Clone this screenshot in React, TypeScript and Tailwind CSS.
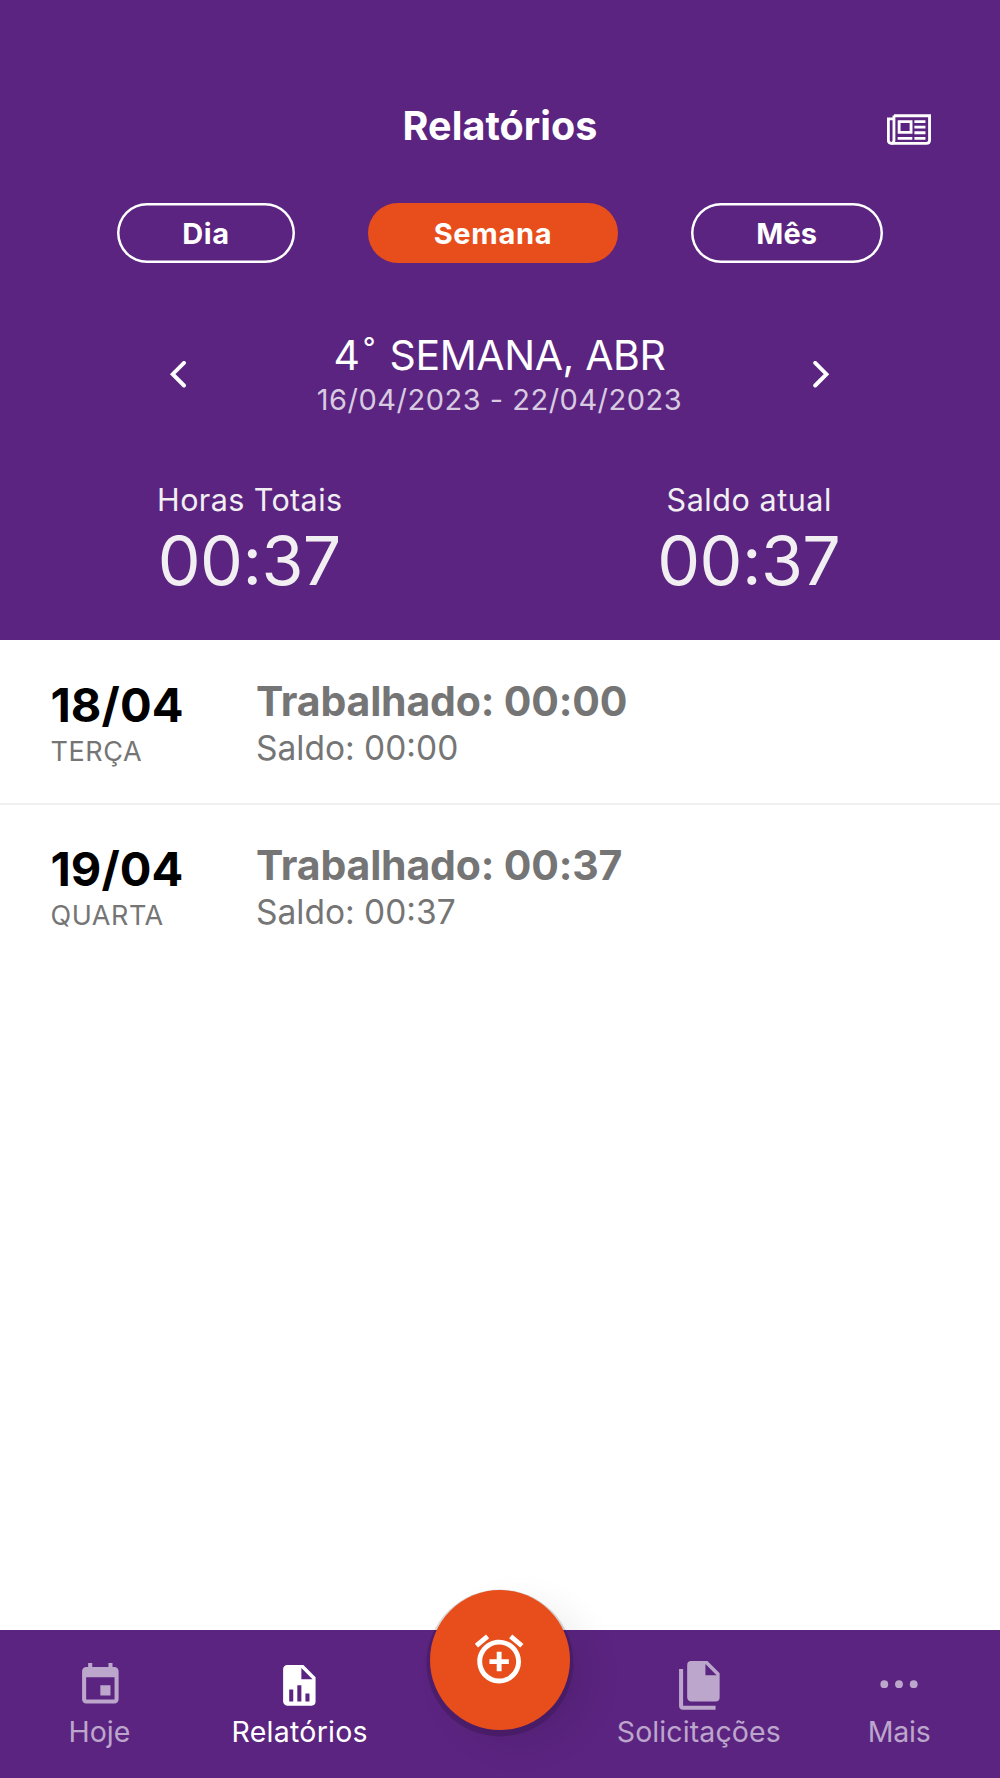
import type { ReactNode } from "react";
import { MdAlarmAdd } from "react-icons/md";

function NewspaperIcon() {
  return (
    <svg width="45" height="32" viewBox="0 0 46 32" fill="none" stroke="currentColor" strokeWidth="2.9">
      <path d="M7.1 1.4H43.5V26.4Q43.5 29.7 40.2 29.7H4.6Q1.4 29.7 1.4 26.4V4.7H7.1" />
      <path d="M7.1 1.3V26.4Q7.1 29.7 4.3 29.7" />
      <path d="M12.4 7.5H24.6V18.5H12.4Z" />
      <path d="M10.9 24.5H25.9M28 7.4H39.3M28 13.1H39.3M28 18.8H39.3M28 24.5H39.3" />
    </svg>
  );
}

function Chevron({ direction }: { direction: "left" | "right" }) {
  return (
    <svg width="18" height="28" viewBox="0 0 18 28" fill="none" stroke="currentColor" strokeWidth="3.9" strokeLinecap="round">
      <path d={direction === "left" ? "M15 1.8L3.7 13.2L15 24.5" : "M3.2 1.8L14.5 13.2L3.2 24.5"} />
    </svg>
  );
}

const CALENDAR =
  "M17 12h-5v5h5v-5zM16 1v2H8V1H6v2H5c-1.1 0-2 .9-2 2v14c0 1.1.9 2 2 2h14c1.1 0 2-.9 2-2V5c0-1.1-.9-2-2-2h-1V1h-2zm3 18H5V8h14v11z";
const FILE_CHART =
  "M13,9H18.5L13,3.5V9M6,2H14L20,8V20A2,2 0 0,1 18,22H6C4.89,22 4,21.1 4,20V4C4,2.89 4.89,2 6,2M7,20H9V14H7V20M11,20H13V12H11V20M15,20H17V16H15V20Z";
const FILES =
  "M15,7H20.5L15,1.5V7M8,0H16L22,6V18A2,2 0 0,1 20,20H8C6.89,20 6,19.1 6,18V2A2,2 0 0,1 8,0M4,4V22H20V24H4A2,2 0 0,1 2,22V4H4Z";

function Glyph({ d }: { d: string }) {
  return (
    <svg width="48.7" height="48.7" viewBox="0 0 24 24" fill="currentColor">
      <path d={d} />
    </svg>
  );
}

function Dots() {
  return (
    <svg width="48" height="48" viewBox="0 0 48 48" fill="currentColor">
      <circle cx="9.3" cy="23.2" r="3.9" />
      <circle cx="24" cy="23.2" r="3.9" />
      <circle cx="38.7" cy="23.2" r="3.9" />
    </svg>
  );
}

function Tab({ icon, label, active = false, className }: { icon: ReactNode; label: string; active?: boolean; className: string }) {
  return (
    <button className={`flex flex-col items-center pt-[30.6px] ${active ? "text-white" : "text-[#bda6cc]"}`}>
      <span className="flex h-[53.4px] items-start">{icon}</span>
      <span className={`text-[28.5px] leading-9 whitespace-nowrap ${className}`}>{label}</span>
    </button>
  );
}

function Total({ label, value, className }: { label: string; value: string; className: string }) {
  return (
    <div className="flex flex-col items-center text-[#f1eff2]">
      <span className={`text-[30.5px] leading-9 ${className}`}>{label}</span>
      <span className="mt-[2.5px] mr-[1px] text-[68px] leading-[80px] tracking-[-0.6px]">{value}</span>
    </div>
  );
}

const days = [
  { date: "18/04", name: "TERÇA", worked: "00:00", balance: "00:00" },
  { date: "19/04", name: "QUARTA", worked: "00:37", balance: "00:37" },
];

export default function App() {
  return (
    <div className="flex h-[1778px] w-[1000px] flex-col bg-white font-[Inter,sans-serif]">
      <header className="flex h-[640.4px] shrink-0 flex-col bg-[#5b2480] pt-[102px] text-white">
        <div className="grid grid-cols-[1fr_auto_1fr] items-start">
          <h1 className="col-start-2 text-[39.5px] leading-12 font-bold tracking-[0.05px]">Relatórios</h1>
          <button className="mt-3 mr-[68px] justify-self-end">
            <NewspaperIcon />
          </button>
        </div>

        <div className="mt-[53px] flex h-[59.5px] justify-between pr-[117.5px] pl-[117px] text-[29px] leading-9 font-bold">
          <button className="w-[178px] rounded-full pt-[2px] tracking-[0.7px] shadow-[inset_0_0_0_2.5px_#fff]">Dia</button>
          <button className="w-[250px] rounded-full bg-[#e84e1b] pt-[2px] tracking-[0.7px]">Semana</button>
          <button className="w-[191.5px] rounded-full pt-[2px] tracking-[0.1px] shadow-[inset_0_0_0_2.5px_#fff]">Mês</button>
        </div>

        <div className="mt-[68.5px] flex items-center justify-between pr-[170px] pl-[169px]">
          <button>
            <Chevron direction="left" />
          </button>
          <div className="flex flex-col items-center">
            <div className="flex text-[41px] leading-12 tracking-[-0.4px]">
              <span className="w-[30px]">4</span>
              <span className="w-[26px] font-light">˚</span>
              <span>SEMANA, ABR</span>
            </div>
            <div className="mt-[3px] text-[29px] leading-9 tracking-[0.5px] text-[#d8cbe1]">16/04/2023 - 22/04/2023</div>
          </div>
          <button>
            <Chevron direction="right" />
          </button>
        </div>

        <div className="mt-[63.5px] grid grid-cols-2 pr-[1px]">
          <Total label="Horas Totais" value="00:37" className="tracking-[0.4px]" />
          <Total label="Saldo atual" value="00:37" className="tracking-[0.55px]" />
        </div>
      </header>

      <main className="grow">
        {days.map((day, i) => (
          <div
            key={day.date}
            className={`flex h-[164.5px] pt-[36.6px] pl-[50.5px] ${i < days.length - 1 ? "border-b-2 border-[#efefef]" : ""}`}
          >
            <div className="flex w-[205.5px] flex-col">
              <span className="text-[47px] leading-14 font-bold tracking-[0.1px] text-black">{day.date}</span>
              <span className="mt-[3px] text-[27px] leading-8 tracking-[0.55px] text-[#757575]">{day.name}</span>
            </div>
            <div className="flex flex-col text-[#757575]">
              <span className="text-[41px] leading-12 font-bold tracking-[-0.18px]">Trabalhado: {day.worked}</span>
              <span className="mt-[2.6px] text-[33.5px] leading-10">Saldo: {day.balance}</span>
            </div>
          </div>
        ))}
      </main>

      <nav className="relative grid h-[147.6px] shrink-0 grid-cols-5 bg-[#5b2480] pr-[1px]">
        <Tab icon={<Glyph d={CALENDAR} />} label="Hoje" className="mr-[1px]" />
        <Tab icon={<Glyph d={FILE_CHART} />} label="Relatórios" active className="tracking-[0.25px]" />
        <div className="flex justify-center">
          <button className="absolute -top-[40.4px] left-[430px] flex size-[140px] items-center justify-center rounded-full bg-[#e84e1b] pr-[1.5px] pb-[1px] text-white shadow-[0_3px_0_3.5px_rgba(0,0,0,0.15),20px_14px_36px_0_rgba(0,0,0,0.08)]">
            <MdAlarmAdd className="size-[58.3px]" />
          </button>
        </div>
        <Tab icon={<Glyph d={FILES} />} label="Solicitações" className="mr-[1px] tracking-[0.1px]" />
        <Tab icon={<Dots />} label="Mais" className="tracking-[-0.2px]" />
      </nav>
    </div>
  );
}
